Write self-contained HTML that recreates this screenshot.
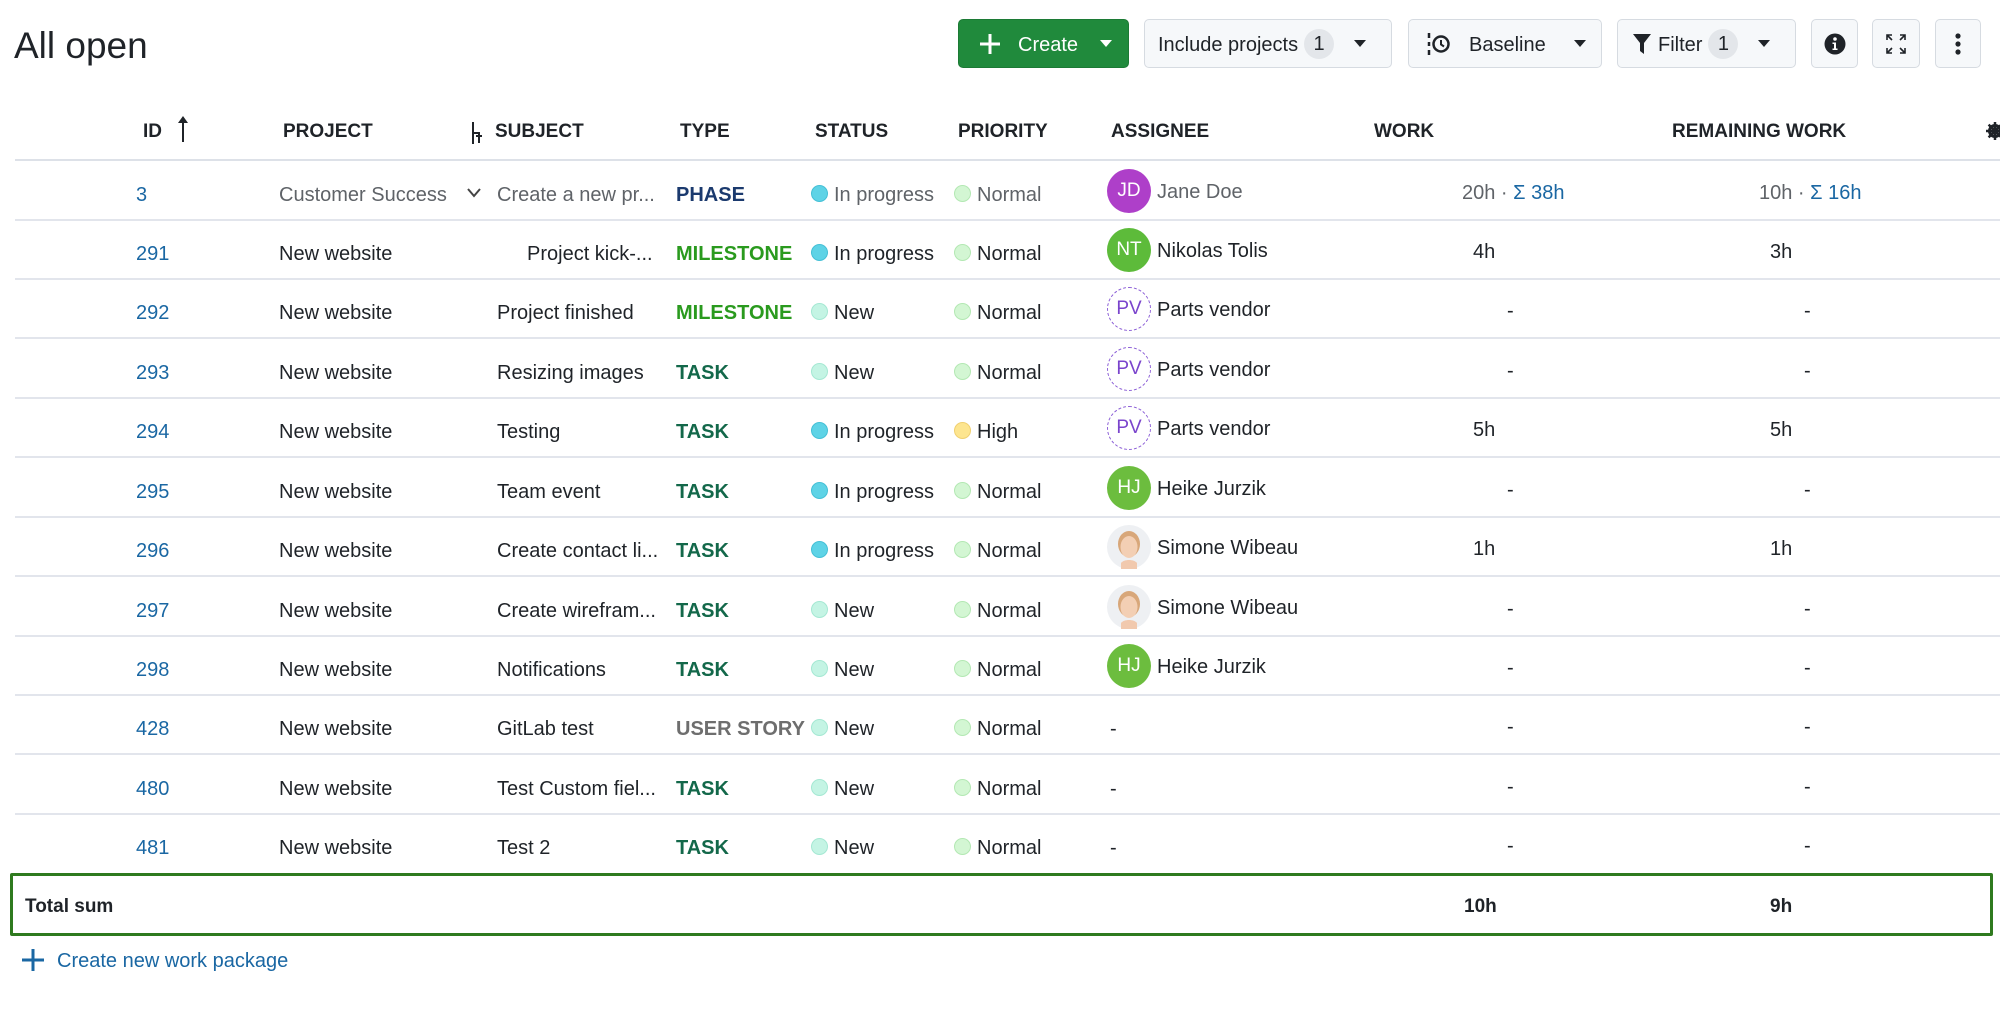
<!DOCTYPE html>
<html><head><meta charset="utf-8"><style>
*{box-sizing:border-box;margin:0;padding:0}
body{width:2000px;height:1013px;background:#fff;font-family:"Liberation Sans",sans-serif;color:#1f2328;position:relative;overflow:hidden;font-size:20px}
.a{position:absolute;white-space:nowrap}
.btn{position:absolute;top:19px;height:49px;border:1px solid #d6dbe1;border-radius:5px;background:#f6f8fa;display:flex;align-items:center;font-size:20px;color:#1f2328;padding-top:4px}
.badge{display:inline-block;width:30px;height:30px;border-radius:15px;background:#e3e6ea;text-align:center;line-height:30px;margin-left:6px;margin-top:-4px}
.caret{width:0;height:0;border-left:6px solid transparent;border-right:6px solid transparent;border-top:7px solid #1f2328;display:inline-block;margin-top:-4px}
.btn svg{margin-top:-4px}
.th{position:absolute;top:121px;font-weight:bold;font-size:19px;color:#1f2328}
.row{position:absolute;left:15px;width:1985px;height:60px;border-bottom:2px solid #e2e5ec}
.row .a{top:22px;line-height:24px}
.id{color:#1a67a3}
.dot{position:absolute;top:24px;width:17px;height:17px;border-radius:50%}
.prog{background:#5ed3e6;border:1px solid #45c0d6}
.new{background:#c4f4e4;border:1px solid #a5e8d3}
.norm{background:#d3f6d3;border:1px solid #b3e8b3}
.high{background:#fde58f;border:1px solid #f0d070}
.av{position:absolute;top:8px;left:1092px;width:44px;height:44px;border-radius:50%;color:#fff;text-align:center;line-height:44px;font-size:19px}
.pv{border:1.5px dashed #8a5cd6;color:#7a44cc;background:#fff;line-height:41px}
.phase{color:#1b3a6e;font-weight:bold}
.ms{color:#2a9a1e;font-weight:bold}
.task{color:#13684a;font-weight:bold}
.us{color:#6e6e6e;font-weight:bold}
.g{color:#5f6368}
.row .nm{top:19px}
.row .wk{top:20px}
</style></head><body>
<div class="a" style="left:14px;top:25px;font-size:37px;color:#1f2328">All open</div>

<div class="btn" style="left:958px;width:171px;background:#208a3c;border-color:#1c7a35;color:#fff">
 <svg style="margin-left:19px" width="24" height="24" viewBox="0 0 24 24"><path d="M12 2v20M2 12h20" stroke="#fff" stroke-width="3"/></svg>
 <span style="margin-left:16px">Create</span><span class="caret" style="border-top-color:#fff;margin-left:22px"></span></div>
<div class="btn" style="left:1144px;width:248px"><span style="margin-left:13px">Include projects</span><span class="badge">1</span><span class="caret" style="margin-left:20px"></span></div>
<div class="btn" style="left:1408px;width:194px">
 <svg style="margin-left:16px" width="28" height="24" viewBox="0 0 28 24"><path d="M4 1v5M4 10v4M4 18v5" stroke="#1f2328" stroke-width="2.5"/><circle cx="16" cy="12" r="7.5" fill="none" stroke="#1f2328" stroke-width="2.5"/><path d="M16 8v4.5l3 2" stroke="#1f2328" stroke-width="2" fill="none"/></svg>
 <span style="margin-left:16px">Baseline</span><span class="caret" style="margin-left:28px"></span></div>
<div class="btn" style="left:1617px;width:179px">
 <svg style="margin-left:14px" width="20" height="22" viewBox="0 0 20 22"><path d="M1 1h18l-7 9v11l-4-3v-8z" fill="#1f2328"/></svg>
 <span style="margin-left:6px">Filter</span><span class="badge">1</span><span class="caret" style="margin-left:20px"></span></div>
<div class="btn" style="left:1811px;width:47px;justify-content:center">
 <svg width="22" height="22" viewBox="0 0 22 22"><circle cx="11" cy="11" r="10.5" fill="#1f2328"/><circle cx="11" cy="6" r="1.8" fill="#fff"/><path d="M8.5 9.5h3.5v6h1.5v1.5h-5v-1.5h1.5v-4.5h-1.5z" fill="#fff"/></svg></div>
<div class="btn" style="left:1872px;width:48px;justify-content:center">
 <svg width="22" height="22" viewBox="0 0 22 22" fill="none" stroke="#1f2328" stroke-width="1.6"><path d="M2 7V2h5M2 2l5 5M20 7V2h-5M20 2l-5 5M2 15v5h5M2 20l5-5M20 15v5h-5M20 20l-5-5"/></svg></div>
<div class="btn" style="left:1935px;width:46px;justify-content:center">
 <svg width="6" height="22" viewBox="0 0 6 22"><circle cx="3" cy="3" r="2.6" fill="#1f2328"/><circle cx="3" cy="11" r="2.6" fill="#1f2328"/><circle cx="3" cy="19" r="2.6" fill="#1f2328"/></svg></div>

<div class="th" style="left:143px">ID</div>
<svg class="a" style="left:177px;top:115px" width="12" height="28" viewBox="0 0 12 28"><path d="M6 3v24" stroke="#1f2328" stroke-width="2"/><path d="M1 8L6 1l5 7z" fill="#1f2328"/></svg>
<div class="th" style="left:283px">PROJECT</div>
<svg class="a" style="left:470px;top:122px" width="14" height="22" viewBox="0 0 14 22"><path d="M3 0v22M3 11h6v10M6 14h6" stroke="#1f2328" stroke-width="2" fill="none"/></svg>
<div class="th" style="left:495px">SUBJECT</div>
<div class="th" style="left:680px">TYPE</div>
<div class="th" style="left:815px">STATUS</div>
<div class="th" style="left:958px">PRIORITY</div>
<div class="th" style="left:1111px">ASSIGNEE</div>
<div class="th" style="left:1374px">WORK</div>
<div class="th" style="left:1672px">REMAINING WORK</div>
<svg class="a" style="left:1986px;top:122px" width="18" height="18" viewBox="0 0 18 18"><circle cx="9" cy="9" r="5.5" fill="none" stroke="#1f2328" stroke-width="3"/><path d="M9 0v18M0 9h18M2.6 2.6l12.8 12.8M15.4 2.6L2.6 15.4" stroke="#1f2328" stroke-width="2.5"/></svg>
<div class="a" style="left:15px;top:159px;width:1985px;height:2px;background:#dde1e8"></div>

<div class="row" style="top:161px">
 <div class="a id" style="left:121px">3</div>
 <div class="a g" style="left:264px">Customer Success</div>
 <svg class="a" style="left:452px;top:27px" width="14" height="10" viewBox="0 0 14 10"><path d="M1 1l6 7 6-7" stroke="#444" stroke-width="2" fill="none"/></svg>
 <div class="a g" style="left:482px">Create a new pr...</div>
 <div class="a phase" style="left:661px">PHASE</div>
 <div class="dot prog" style="left:796px"></div><div class="a g" style="left:819px">In progress</div>
 <div class="dot norm" style="left:939px"></div><div class="a g" style="left:962px">Normal</div>
 <div class="av" style="background:#ae3fc9">JD</div><div class="a g nm" style="left:1142px">Jane Doe</div>
 <div class="a g wk" style="left:1447px">20h · <span style="color:#1a67a3">Σ 38h</span></div>
 <div class="a g wk" style="left:1744px">10h · <span style="color:#1a67a3">Σ 16h</span></div>
</div>
<div class="row" style="top:220px">
 <div class="a id" style="left:121px">291</div><div class="a" style="left:264px">New website</div>
 <div class="a" style="left:512px">Project kick-...</div><div class="a ms" style="left:661px">MILESTONE</div>
 <div class="dot prog" style="left:796px"></div><div class="a" style="left:819px">In progress</div>
 <div class="dot norm" style="left:939px"></div><div class="a" style="left:962px">Normal</div>
 <div class="av" style="background:#5dbb3a">NT</div><div class="a nm" style="left:1142px">Nikolas Tolis</div>
 <div class="a wk" style="left:1458px">4h</div><div class="a wk" style="left:1755px">3h</div>
</div>
<div class="row" style="top:279px">
 <div class="a id" style="left:121px">292</div><div class="a" style="left:264px">New website</div>
 <div class="a" style="left:482px">Project finished</div><div class="a ms" style="left:661px">MILESTONE</div>
 <div class="dot new" style="left:796px"></div><div class="a" style="left:819px">New</div>
 <div class="dot norm" style="left:939px"></div><div class="a" style="left:962px">Normal</div>
 <div class="av pv">PV</div><div class="a nm" style="left:1142px">Parts vendor</div>
 <div class="a wk" style="left:1492px">-</div><div class="a wk" style="left:1789px">-</div>
</div>
<div class="row" style="top:339px">
 <div class="a id" style="left:121px">293</div><div class="a" style="left:264px">New website</div>
 <div class="a" style="left:482px">Resizing images</div><div class="a task" style="left:661px">TASK</div>
 <div class="dot new" style="left:796px"></div><div class="a" style="left:819px">New</div>
 <div class="dot norm" style="left:939px"></div><div class="a" style="left:962px">Normal</div>
 <div class="av pv">PV</div><div class="a nm" style="left:1142px">Parts vendor</div>
 <div class="a wk" style="left:1492px">-</div><div class="a wk" style="left:1789px">-</div>
</div>
<div class="row" style="top:398px">
 <div class="a id" style="left:121px">294</div><div class="a" style="left:264px">New website</div>
 <div class="a" style="left:482px">Testing</div><div class="a task" style="left:661px">TASK</div>
 <div class="dot prog" style="left:796px"></div><div class="a" style="left:819px">In progress</div>
 <div class="dot high" style="left:939px"></div><div class="a" style="left:962px">High</div>
 <div class="av pv">PV</div><div class="a nm" style="left:1142px">Parts vendor</div>
 <div class="a wk" style="left:1458px">5h</div><div class="a wk" style="left:1755px">5h</div>
</div>
<div class="row" style="top:458px">
 <div class="a id" style="left:121px">295</div><div class="a" style="left:264px">New website</div>
 <div class="a" style="left:482px">Team event</div><div class="a task" style="left:661px">TASK</div>
 <div class="dot prog" style="left:796px"></div><div class="a" style="left:819px">In progress</div>
 <div class="dot norm" style="left:939px"></div><div class="a" style="left:962px">Normal</div>
 <div class="av" style="background:#6cbd3e">HJ</div><div class="a nm" style="left:1142px">Heike Jurzik</div>
 <div class="a wk" style="left:1492px">-</div><div class="a wk" style="left:1789px">-</div>
</div>
<div class="row" style="top:517px">
 <div class="a id" style="left:121px">296</div><div class="a" style="left:264px">New website</div>
 <div class="a" style="left:482px">Create contact li...</div><div class="a task" style="left:661px">TASK</div>
 <div class="dot prog" style="left:796px"></div><div class="a" style="left:819px">In progress</div>
 <div class="dot norm" style="left:939px"></div><div class="a" style="left:962px">Normal</div>
 <div class="av" style="background:#eef0f3"><svg width="44" height="44" viewBox="0 0 44 44"><ellipse cx="22" cy="19" rx="11" ry="13" fill="#d8a77a"/><ellipse cx="22" cy="22" rx="8.5" ry="11" fill="#f3cfb4"/><path d="M14 38c3-4 13-4 16 0v6H14z" fill="#f1c9ae"/></svg></div><div class="a nm" style="left:1142px">Simone Wibeau</div>
 <div class="a wk" style="left:1458px">1h</div><div class="a wk" style="left:1755px">1h</div>
</div>
<div class="row" style="top:577px">
 <div class="a id" style="left:121px">297</div><div class="a" style="left:264px">New website</div>
 <div class="a" style="left:482px">Create wirefram...</div><div class="a task" style="left:661px">TASK</div>
 <div class="dot new" style="left:796px"></div><div class="a" style="left:819px">New</div>
 <div class="dot norm" style="left:939px"></div><div class="a" style="left:962px">Normal</div>
 <div class="av" style="background:#eef0f3"><svg width="44" height="44" viewBox="0 0 44 44"><ellipse cx="22" cy="19" rx="11" ry="13" fill="#d8a77a"/><ellipse cx="22" cy="22" rx="8.5" ry="11" fill="#f3cfb4"/><path d="M14 38c3-4 13-4 16 0v6H14z" fill="#f1c9ae"/></svg></div><div class="a nm" style="left:1142px">Simone Wibeau</div>
 <div class="a wk" style="left:1492px">-</div><div class="a wk" style="left:1789px">-</div>
</div>
<div class="row" style="top:636px">
 <div class="a id" style="left:121px">298</div><div class="a" style="left:264px">New website</div>
 <div class="a" style="left:482px">Notifications</div><div class="a task" style="left:661px">TASK</div>
 <div class="dot new" style="left:796px"></div><div class="a" style="left:819px">New</div>
 <div class="dot norm" style="left:939px"></div><div class="a" style="left:962px">Normal</div>
 <div class="av" style="background:#6cbd3e">HJ</div><div class="a nm" style="left:1142px">Heike Jurzik</div>
 <div class="a wk" style="left:1492px">-</div><div class="a wk" style="left:1789px">-</div>
</div>
<div class="row" style="top:695px">
 <div class="a id" style="left:121px">428</div><div class="a" style="left:264px">New website</div>
 <div class="a" style="left:482px">GitLab test</div><div class="a us" style="left:661px">USER STORY</div>
 <div class="dot new" style="left:796px"></div><div class="a" style="left:819px">New</div>
 <div class="dot norm" style="left:939px"></div><div class="a" style="left:962px">Normal</div>
 <div class="a" style="left:1095px">-</div>
 <div class="a wk" style="left:1492px">-</div><div class="a wk" style="left:1789px">-</div>
</div>
<div class="row" style="top:755px">
 <div class="a id" style="left:121px">480</div><div class="a" style="left:264px">New website</div>
 <div class="a" style="left:482px">Test Custom fiel...</div><div class="a task" style="left:661px">TASK</div>
 <div class="dot new" style="left:796px"></div><div class="a" style="left:819px">New</div>
 <div class="dot norm" style="left:939px"></div><div class="a" style="left:962px">Normal</div>
 <div class="a" style="left:1095px">-</div>
 <div class="a wk" style="left:1492px">-</div><div class="a wk" style="left:1789px">-</div>
</div>
<div class="row" style="top:814px;border-bottom:none">
 <div class="a id" style="left:121px">481</div><div class="a" style="left:264px">New website</div>
 <div class="a" style="left:482px">Test 2</div><div class="a task" style="left:661px">TASK</div>
 <div class="dot new" style="left:796px"></div><div class="a" style="left:819px">New</div>
 <div class="dot norm" style="left:939px"></div><div class="a" style="left:962px">Normal</div>
 <div class="a" style="left:1095px">-</div>
 <div class="a wk" style="left:1492px">-</div><div class="a wk" style="left:1789px">-</div>
</div>

<div class="a" style="left:10px;top:873px;width:1983px;height:63px;border:3px solid #2f7a1f;border-radius:2px"></div>
<div class="a" style="left:25px;top:896px;font-weight:bold;font-size:19px">Total sum</div>
<div class="a" style="left:1464px;top:896px;font-weight:bold;font-size:19px">10h</div>
<div class="a" style="left:1770px;top:896px;font-weight:bold;font-size:19px">9h</div>

<svg class="a" style="left:21px;top:948px" width="24" height="24" viewBox="0 0 24 24"><path d="M12 1v22M1 12h22" stroke="#1a67a3" stroke-width="3"/></svg>
<div class="a" style="left:57px;top:950px;color:#1a67a3">Create new work package</div>
</body></html>
